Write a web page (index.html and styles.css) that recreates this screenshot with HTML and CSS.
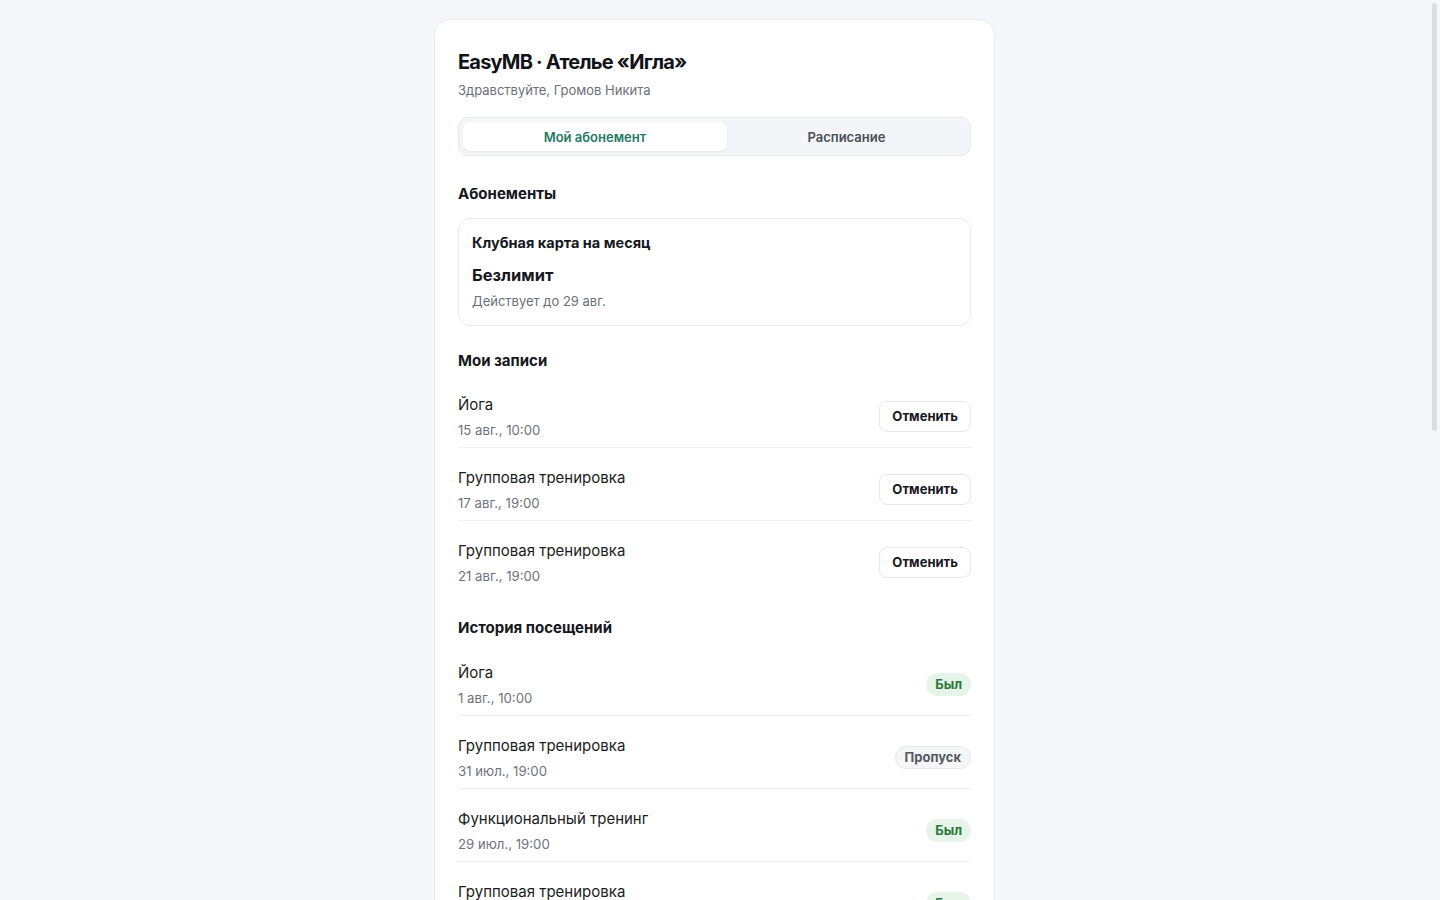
FILE: index.html
```html
<!DOCTYPE html>
<html lang="ru">
<head>
<meta charset="utf-8">
<title>EasyMB · Ателье «Игла»</title>
<link rel="stylesheet" href="styles.css">
</head>
<body>
<main class="page">
  <section class="card">
    <header class="head">
      <h1 class="title">EasyMB · Ателье «Игла»</h1>
      <p class="greet">Здравствуйте, Громов Никита</p>
    </header>

    <nav class="tabs">
      <button class="tab tab-active">Мой абонемент</button>
      <button class="tab">Расписание</button>
    </nav>

    <section class="block">
      <h2 class="block-title">Абонементы</h2>
      <div class="pass">
        <div class="pass-name">Клубная карта на месяц</div>
        <div class="pass-kind">Безлимит</div>
        <div class="pass-until">Действует до 29 авг.</div>
      </div>
    </section>

    <section class="block">
      <h2 class="block-title">Мои записи</h2>
      <ul class="list list-booked">
        <li class="row">
          <div class="row-text">
            <div class="row-name">Йога</div>
            <div class="row-date">15 авг., 10:00</div>
          </div>
          <button class="btn">Отменить</button>
        </li>
        <li class="row">
          <div class="row-text">
            <div class="row-name">Групповая тренировка</div>
            <div class="row-date">17 авг., 19:00</div>
          </div>
          <button class="btn">Отменить</button>
        </li>
        <li class="row">
          <div class="row-text">
            <div class="row-name">Групповая тренировка</div>
            <div class="row-date">21 авг., 19:00</div>
          </div>
          <button class="btn">Отменить</button>
        </li>
      </ul>
    </section>

    <section class="block">
      <h2 class="block-title">История посещений</h2>
      <ul class="list list-history">
        <li class="row">
          <div class="row-text">
            <div class="row-name">Йога</div>
            <div class="row-date">1 авг., 10:00</div>
          </div>
          <span class="badge badge-ok">Был</span>
        </li>
        <li class="row">
          <div class="row-text">
            <div class="row-name">Групповая тренировка</div>
            <div class="row-date">31 июл., 19:00</div>
          </div>
          <span class="badge badge-miss">Пропуск</span>
        </li>
        <li class="row">
          <div class="row-text">
            <div class="row-name">Функциональный тренинг</div>
            <div class="row-date">29 июл., 19:00</div>
          </div>
          <span class="badge badge-ok">Был</span>
        </li>
        <li class="row">
          <div class="row-text">
            <div class="row-name">Групповая тренировка</div>
            <div class="row-date">27 июл., 19:00</div>
          </div>
          <span class="badge badge-ok">Был</span>
        </li>
        <li class="row">
          <div class="row-text">
            <div class="row-name">Йога</div>
            <div class="row-date">25 июл., 10:00</div>
          </div>
          <span class="badge badge-ok">Был</span>
        </li>
        <li class="row">
          <div class="row-text">
            <div class="row-name">Групповая тренировка</div>
            <div class="row-date">24 июл., 19:00</div>
          </div>
          <span class="badge badge-miss">Пропуск</span>
        </li>
        <li class="row">
          <div class="row-text">
            <div class="row-name">Функциональный тренинг</div>
            <div class="row-date">22 июл., 19:00</div>
          </div>
          <span class="badge badge-ok">Был</span>
        </li>
        <li class="row">
          <div class="row-text">
            <div class="row-name">Йога</div>
            <div class="row-date">18 июл., 10:00</div>
          </div>
          <span class="badge badge-ok">Был</span>
        </li>
        <li class="row">
          <div class="row-text">
            <div class="row-name">Групповая тренировка</div>
            <div class="row-date">17 июл., 19:00</div>
          </div>
          <span class="badge badge-ok">Был</span>
        </li>
        <li class="row">
          <div class="row-text">
            <div class="row-name">Групповая тренировка</div>
            <div class="row-date">15 июл., 19:00</div>
          </div>
          <span class="badge badge-ok">Был</span>
        </li>
      </ul>
    </section>
  </section>
</main>
<div class="scroll-thumb" aria-hidden="true"></div>
</body>
</html>
```

FILE: styles.css
```css
* {
  box-sizing: border-box;
}

html,
body {
  margin: 0;
  padding: 0;
}

body {
  background: #f5f7fa;
  color: #16181d;
  font-family: Inter, "Noto Sans", "Liberation Sans", sans-serif;
  -webkit-font-smoothing: antialiased;
}

/* right side leaves room for the page scrollbar gutter */
.page {
  padding: 19px 27px 40px 16px;
}

/* overlay scrollbar thumb in the right gutter */
.scroll-thumb {
  position: fixed;
  top: 3px;
  right: 3px;
  width: 5px;
  height: 428px;
  border-radius: 3px;
  background: #dadde3;
}

.card {
  max-width: 561px;
  margin: 0 auto;
  background: #ffffff;
  border: 1px solid #e6e9ee;
  border-radius: 16px;
  padding: 27px 23px 24px;
}

.head {
  margin-bottom: 17px;
}

.title {
  margin: 0;
  font-size: 20px;
  line-height: 30px;
  font-weight: 700;
  letter-spacing: -0.8px;
  color: #111318;
}

.greet {
  margin: 3px 0 0;
  font-size: 13px;
  line-height: 20px;
  color: #6b7079;
}

/* segmented switch: tabs share spare room, longer label gets the wider tab */
.tabs {
  display: flex;
  padding: 4px;
  background: #f3f5f8;
  border: 1px solid #e6e9ee;
  border-radius: 10px;
}

.tab {
  flex: 1 1 auto;
  height: 29px;
  padding: 0 12px;
  border: 0;
  border-radius: 7px;
  background: transparent;
  font-family: inherit;
  font-size: 13px;
  font-weight: 600;
  color: #4a4f57;
  cursor: pointer;
}

.tab-active {
  background: #ffffff;
  color: #1f7a63;
  box-shadow: 0 1px 2px rgba(16, 24, 40, 0.06);
}

.block {
  margin-top: 26px;
}

.block + .block {
  margin-top: 23px;
}

.block-title {
  margin: 0 0 12px;
  font-size: 15px;
  line-height: 24px;
  font-weight: 700;
  color: #16181d;
}

.pass {
  border: 1px solid #e6e9ee;
  border-radius: 12px;
  padding: 12px 13px 13px;
}

.pass-name {
  font-size: 14.5px;
  line-height: 24px;
  font-weight: 700;
}

.pass-kind {
  margin-top: 7px;
  font-size: 16.5px;
  line-height: 26px;
  font-weight: 700;
}

.pass-until {
  margin-top: 2px;
  font-size: 13px;
  line-height: 22px;
  color: #6b7079;
}

.list {
  list-style: none;
  margin: -10px 0 0;
  padding: 0;
}

.list-history {
  margin-top: -9px;
}

.row {
  display: flex;
  align-items: center;
  justify-content: space-between;
  gap: 16px;
  padding: 17px 0 7px;
  border-bottom: 1px solid #eceef1;
}

.list-booked .row:last-child {
  border-bottom: 0;
}

.row-name {
  font-size: 15px;
  line-height: 26px;
  color: #1a1c21;
}

.row-date {
  margin-top: 2px;
  font-size: 13.2px;
  line-height: 20px;
  color: #6e737b;
}

.btn {
  height: 31px;
  padding: 0 12px;
  border: 1px solid #e4e7ec;
  border-radius: 8px;
  background: #ffffff;
  font-family: inherit;
  font-size: 13px;
  font-weight: 700;
  color: #17191e;
  cursor: pointer;
}

.badge {
  display: inline-flex;
  align-items: center;
  height: 23px;
  padding: 0 9px;
  border-radius: 999px;
  font-size: 13px;
  font-weight: 700;
}

.badge-ok {
  background: #e7f4ea;
  color: #2b7a3b;
}

.badge-miss {
  background: #f4f6f8;
  border: 1px solid #e4e7ec;
  color: #555a62;
}
```
